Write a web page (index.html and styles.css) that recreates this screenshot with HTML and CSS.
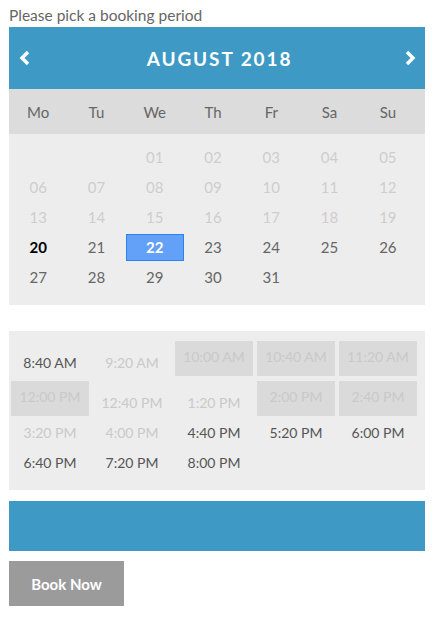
FILE: index.html
```html
<!DOCTYPE html>
<html lang="en">
<head>
    <meta charset="UTF-8">
    <meta name="viewport" content="width=device-width, initial-scale=1.0">
    <title>Booking</title>
    <link rel="stylesheet" href="styles.css">
</head>
<body>
    <div class="booking">
        <p class="intro">Please pick a booking period</p>

        <div class="calendar">
            <div class="cal-header">
                <span class="arrow">
                    <svg width="12" height="16" viewBox="0 0 12 16"><polyline points="9,2 3,8 9,14" fill="none" stroke="#fff" stroke-width="3.4" stroke-linejoin="miter"/></svg>
                </span>
                <span class="month">AUGUST 2018</span>
                <span class="arrow">
                    <svg width="12" height="16" viewBox="0 0 12 16"><polyline points="3,2 9,8 3,14" fill="none" stroke="#fff" stroke-width="3.4" stroke-linejoin="miter"/></svg>
                </span>
            </div>
            <div class="weekdays">
                <span>Mo</span><span>Tu</span><span>We</span><span>Th</span><span>Fr</span><span>Sa</span><span>Su</span>
            </div>
            <div class="days">
                <span></span><span></span>
                <span class="past">01</span><span class="past">02</span><span class="past">03</span><span class="past">04</span><span class="past">05</span>
                <span class="past">06</span><span class="past">07</span><span class="past">08</span><span class="past">09</span><span class="past">10</span><span class="past">11</span><span class="past">12</span>
                <span class="past">13</span><span class="past">14</span><span class="past">15</span><span class="past">16</span><span class="past">17</span><span class="past">18</span><span class="past">19</span>
                <span class="today">20</span><span>21</span><span class="selected">22</span><span>23</span><span>24</span><span>25</span><span>26</span>
                <span>27</span><span>28</span><span>29</span><span>30</span><span>31</span>
            </div>
        </div>

        <div class="slots">
            <span class="slot">8:40 AM</span>
            <span class="slot off">9:20 AM</span>
            <span class="slot booked">10:00 AM</span>
            <span class="slot booked">10:40 AM</span>
            <span class="slot booked">11:20 AM</span>
            <span class="slot booked">12:00 PM</span>
            <span class="slot off">12:40 PM</span>
            <span class="slot off">1:20 PM</span>
            <span class="slot booked">2:00 PM</span>
            <span class="slot booked">2:40 PM</span>
            <span class="slot off">3:20 PM</span>
            <span class="slot off">4:00 PM</span>
            <span class="slot">4:40 PM</span>
            <span class="slot">5:20 PM</span>
            <span class="slot">6:00 PM</span>
            <span class="slot">6:40 PM</span>
            <span class="slot">7:20 PM</span>
            <span class="slot">8:00 PM</span>
        </div>

        <div class="summary"></div>

        <button class="book-btn">Book Now</button>
    </div>
</body>
</html>
```

FILE: styles.css
```css
* {
    margin: 0;
    padding: 0;
    box-sizing: border-box;
    font-family: Lato, 'Open Sans', sans-serif;
}

body {
    background: #fff;
    padding: 5px 9px;
    color: #666;
}

.intro {
    font-size: 15.5px;
    line-height: 20px;
    height: 22px;
    color: #666;
}

.calendar {
    width: 416px;
}

.cal-header {
    background: #3e9ac4;
    height: 62px;
    display: flex;
    align-items: center;
    justify-content: space-between;
    padding: 0 8px 0 9px;
    color: #fff;
}

.arrow {
    display: flex;
    width: 14px;
    justify-content: center;
}

.month {
    font-size: 19px;
    font-weight: bold;
    letter-spacing: 1.9px;
    margin-left: 4px;
}

.weekdays {
    background: #dcdcdc;
    height: 45px;
    display: grid;
    grid-template-columns: repeat(7, 1fr);
    padding-right: 8px;
    align-items: center;
    font-size: 15px;
    color: #666;
}

.weekdays span,
.days span {
    text-align: center;
}

.days {
    background: #ededed;
    display: grid;
    grid-template-columns: repeat(7, 1fr);
    grid-auto-rows: 27px;
    row-gap: 3px;
    padding: 10px 8px 14px 0;
    font-size: 15px;
}

.days span {
    line-height: 27px;
    color: #666;
}

.days .past {
    color: #cdcdcd;
}

.days .today {
    color: #000;
    font-weight: bold;
}

.days .selected {
    background: #63a0f7;
    border: 1px solid #2a84f0;
    color: #fff;
    font-weight: bold;
    line-height: 25px;
}

.slots {
    margin-top: 26px;
    width: 416px;
    background: #ededed;
    display: grid;
    grid-template-columns: repeat(5, 78px);
    grid-template-rows: 40px 40px 30px 30px;
    column-gap: 4px;
    padding: 10px 7px 9px 2px;
    font-size: 14px;
}

.slot {
    text-align: center;
    line-height: 20px;
    align-self: end;
    padding-bottom: 8px;
    color: #555;
}

.slot.off {
    color: #c9c9c9;
}

.slot.booked {
    align-self: start;
    background: #dadada;
    color: #c9c9c9;
    height: 35px;
    line-height: 32px;
    padding-bottom: 0;
}

.summary {
    margin-top: 11px;
    height: 50px;
    background: #3e9ac4;
}

.book-btn {
    margin-top: 10px;
    width: 115px;
    height: 45px;
    background: #9b9b9b;
    color: #fff;
    border: none;
    font-size: 15px;
    font-weight: bold;
    cursor: pointer;
}
```
